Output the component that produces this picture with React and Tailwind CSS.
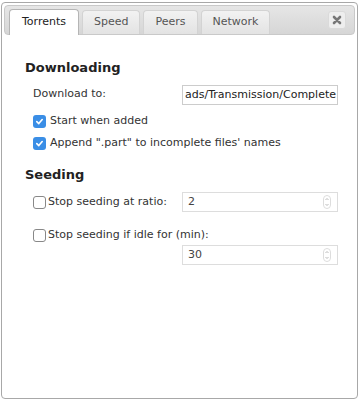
import React from "react";

const font = { fontFamily: '"DejaVu Sans", Verdana, sans-serif' };

function Check({ checked }) {
  return checked ? (
    <span className="w-[13px] h-[13px] rounded-[3px] bg-[#3a8ee6] flex items-center justify-center shrink-0">
      <svg width="9" height="9" viewBox="0 0 10 10">
        <path d="M2 5.2 L4.2 7.3 L8 2.8" fill="none" stroke="white" strokeWidth="1.8" strokeLinecap="round" strokeLinejoin="round" />
      </svg>
    </span>
  ) : (
    <span className="w-[13px] h-[13px] rounded-[3px] border border-[#888] bg-white shrink-0" />
  );
}

function Spin({ value }) {
  return (
    <div className="w-[156px] h-[20px] border border-[#ddd] flex items-center pl-[5px] pr-[6px] text-[11px] text-[#444]">
      <span className="flex-1">{value}</span>
      <svg width="8" height="14" viewBox="0 0 8 14">
        <rect x="0.5" y="0.5" width="7" height="13" rx="3.5" fill="white" stroke="#ddd" />
        <path d="M2.5 5 L4 3.5 L5.5 5 M2.5 9 L4 10.5 L5.5 9" fill="none" stroke="#aaa" strokeWidth="0.8" />
      </svg>
    </div>
  );
}

function Tab({ label, active }) {
  return active ? (
    <div className="h-[26px] px-[12px] flex items-center bg-white border border-[#b5b5b5] border-b-0 rounded-t-[4px] text-[11px] text-[#222] -mb-px">
      {label}
    </div>
  ) : (
    <div className="h-[24px] px-[11px] flex items-center bg-gradient-to-b from-[#f2f2f2] to-[#e3e3e3] border border-[#d3d3d3] border-b-0 rounded-t-[4px] text-[11px] text-[#555]">
      {label}
    </div>
  );
}

export default function App() {
  return (
    <div className="w-[361px] h-[406px] bg-white pt-[2px] pl-[1px]" style={font}>
      <div className="w-[357px] h-[397px] border border-[#a8a8a8] rounded-[4px] p-[2px] flex flex-col">
        <div className="h-[30px] flex items-end gap-[3px] pl-[4px] pr-[8px] rounded-[4px] border border-[#c9c9c9] bg-gradient-to-b from-[#e6e6e6] to-[#d6d6d6]">
          <Tab label="Torrents" active />
          <Tab label="Speed" />
          <Tab label="Peers" />
          <Tab label="Network" />
          <div className="ml-auto self-center w-[18px] h-[18px] rounded-[3px] bg-[#eeeeee] border border-[#dadada] flex items-center justify-center">
            <svg width="10" height="10" viewBox="0 0 10 10">
              <path d="M2 2 L8 8 M8 2 L2 8" stroke="#777" strokeWidth="2.6" strokeLinecap="round" />
            </svg>
          </div>
        </div>

        <div className="pl-[21px] pr-[17px] pt-[24px] text-[11px] text-[#333]">
          <div className="text-[13px] font-bold text-[#222] leading-[18px]">Downloading</div>
          <div className="pl-[8px] mt-[8px]">
            <div className="flex items-start justify-between h-[20px]">
              <span className="mt-[1px]">Download to:</span>
              <div className="w-[156px] h-[20px] border border-[#ccc] flex justify-end items-center whitespace-nowrap pr-[1px] text-[11px] text-[#222]">
                <span>ads/Transmission/Complete</span>
              </div>
            </div>
            <div className="flex items-center gap-[4px] mt-[8px] h-[17px]">
              <Check checked />
              <span>Start when added</span>
            </div>
            <div className="flex items-center gap-[4px] mt-[5px] h-[17px]">
              <Check checked />
              <span>Append ".part" to incomplete files' names</span>
            </div>
          </div>

          <div className="text-[13px] font-bold text-[#222] leading-[18px] mt-[14px]">Seeding</div>
          <div className="pl-[8px] mt-[8px]">
            <div className="flex items-center justify-between h-[20px]">
              <div className="flex items-center gap-[2px]">
                <Check />
                <span>Stop seeding at ratio:</span>
              </div>
              <Spin value="2" />
            </div>
            <div className="flex items-center gap-[2px] mt-[15px] h-[17px]">
              <Check />
              <span>Stop seeding if idle for (min):</span>
            </div>
            <div className="flex justify-end mt-[1px]">
              <Spin value="30" />
            </div>
          </div>
        </div>
      </div>
    </div>
  );
}
